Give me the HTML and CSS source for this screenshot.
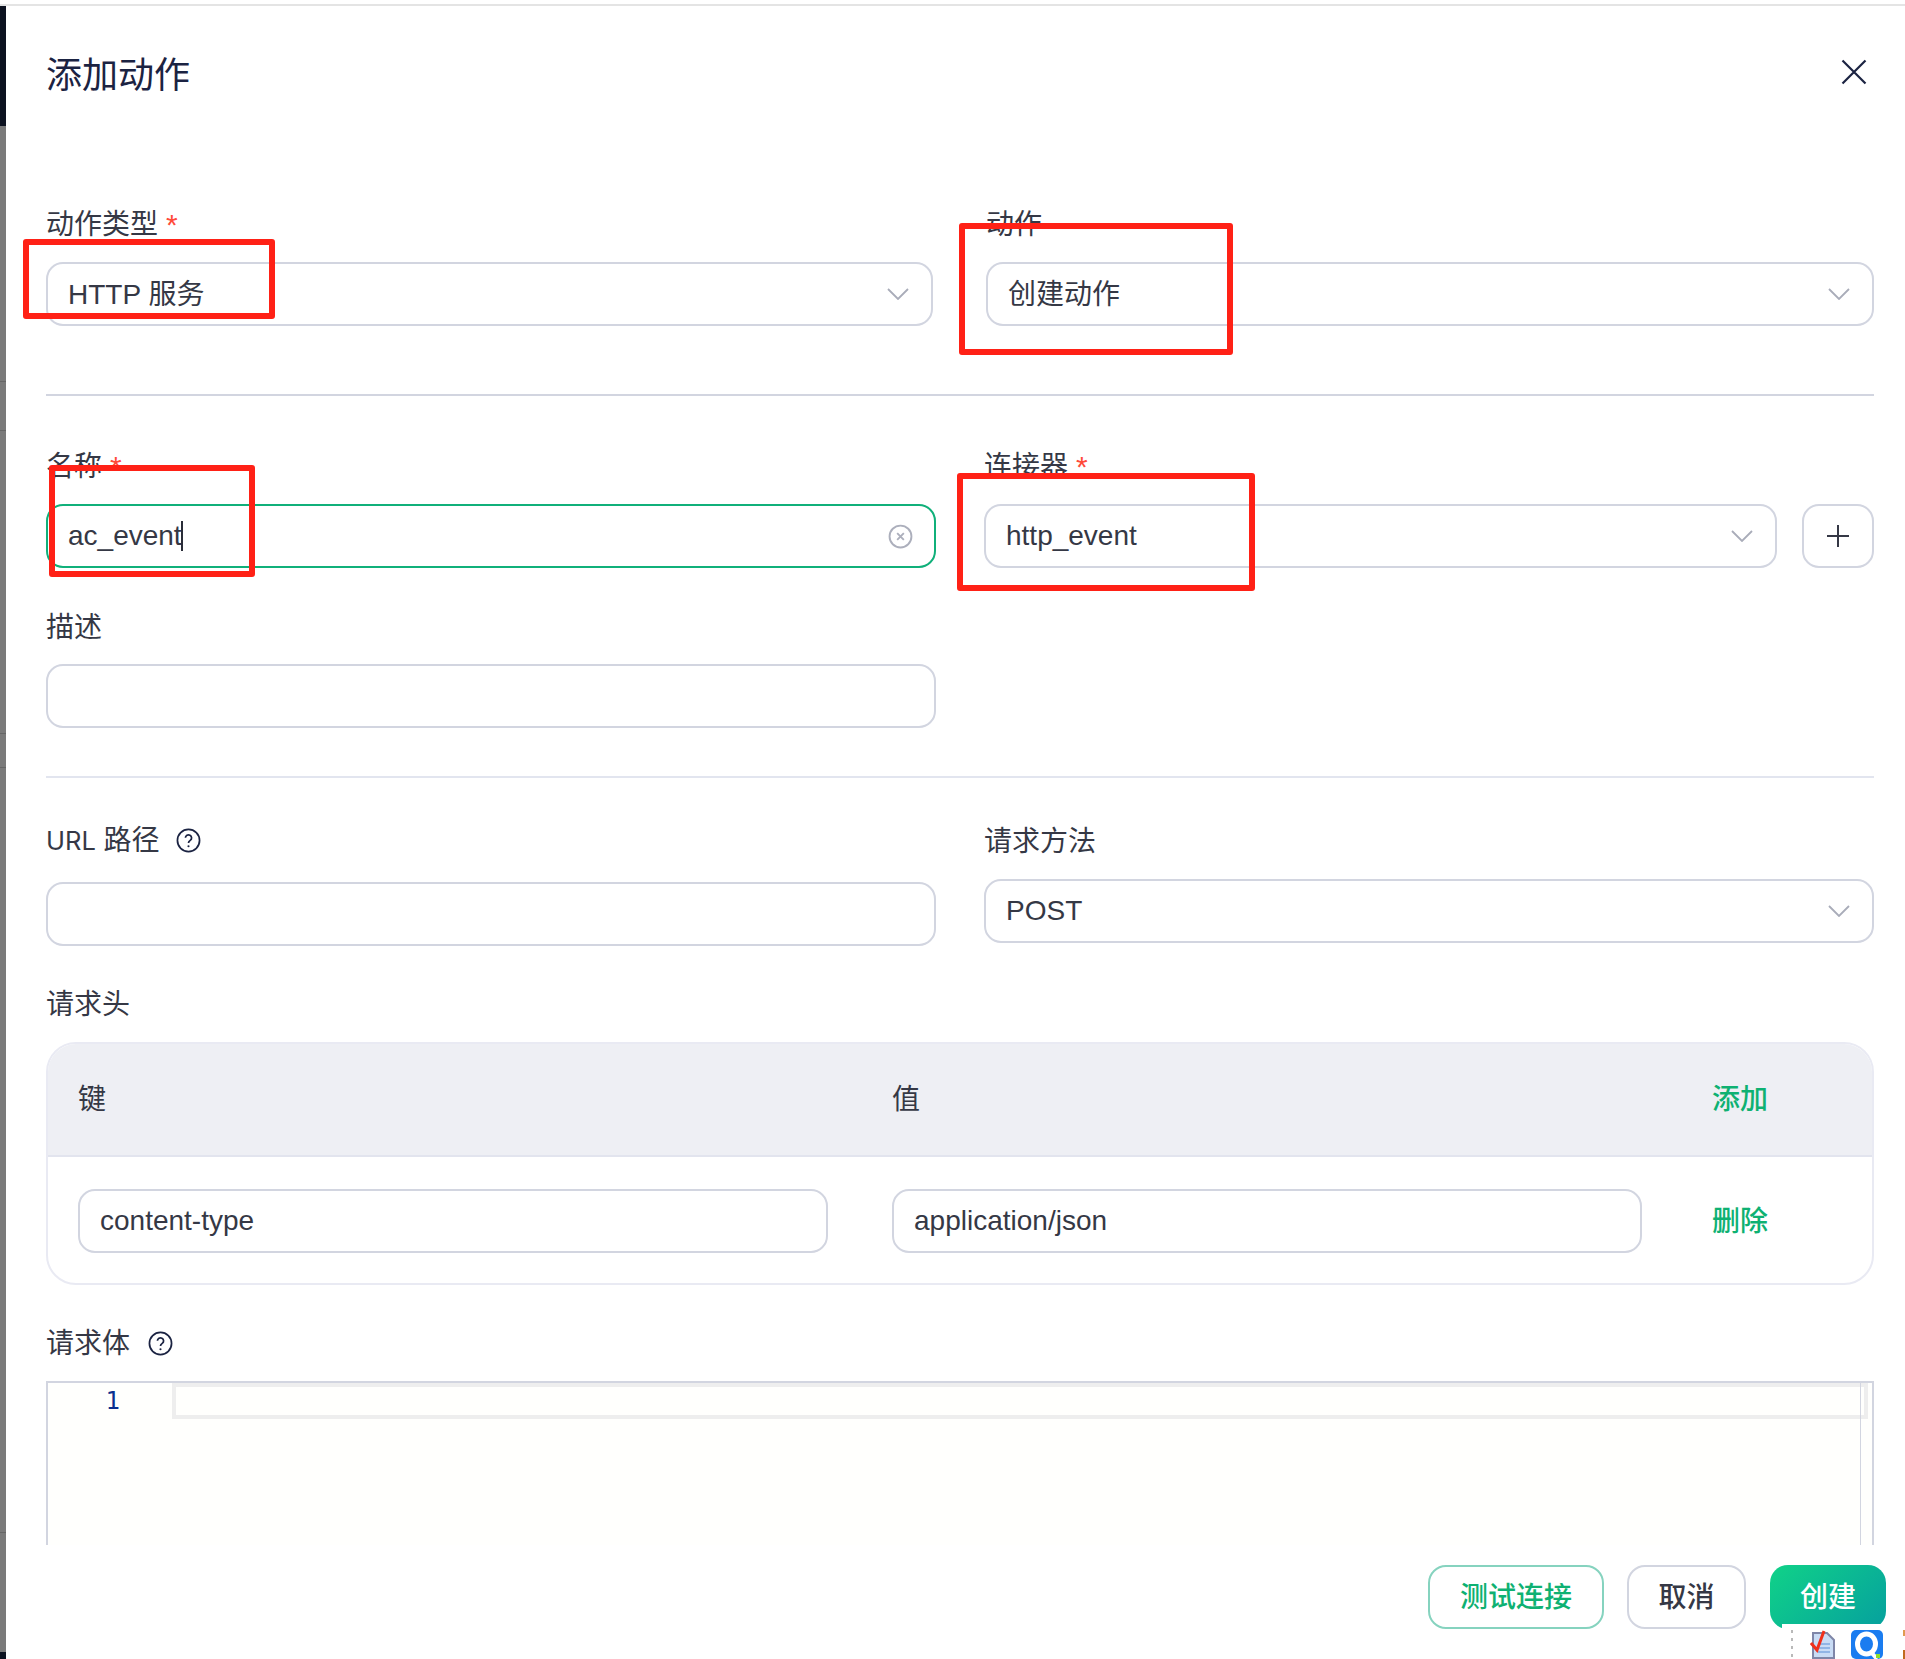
FILE: index.html
```html
<!DOCTYPE html>
<html lang="zh-CN">
<head>
<meta charset="utf-8">
<title>添加动作</title>
<link rel="stylesheet" href="styles.css">
</head>
<body>
<div class="page">
  <div class="topline"></div>
  <div class="main">
    <div class="strip"></div>
    <div class="modal">
      <header class="head">
        <h1 class="title">添加动作</h1>
        <svg class="close" viewBox="0 0 26 26" aria-label="关闭"><path d="M1.500 1.500 24.500 24.500M24.500 1.500 1.500 24.500"/></svg>
      </header>

      <div class="row row-a">
        <div class="field">
          <label class="label">动作类型<span class="req">*</span></label>
          <div class="control select"><span class="up">HTTP 服务</span><svg class="chev" viewBox="0 0 22 12"><path d="M1 1 11 11 21 1"/></svg></div>
        </div>
        <div class="field">
          <label class="label">动作</label>
          <div class="control select"><span class="up">创建动作</span><svg class="chev" viewBox="0 0 22 12"><path d="M1 1 11 11 21 1"/></svg></div>
        </div>
      </div>

      <div class="divider divider-a"></div>

      <div class="row row-b row-name">
        <div class="field">
          <label class="label">名称<span class="req">*</span></label>
          <div class="control focused"><span class="typed">ac_event<i class="caret"></i></span>
            <svg class="clear" viewBox="0 0 24 24"><circle cx="12" cy="12" r="10.500"/><path d="M8.800 8.800 15.200 15.200M15.200 8.800 8.800 15.200"/></svg>
          </div>
        </div>
        <div class="field">
          <label class="label">连接器<span class="req">*</span></label>
          <div class="connector">
            <div class="control select grow"><span>http_event</span><svg class="chev" viewBox="0 0 22 12"><path d="M1 1 11 11 21 1"/></svg></div>
            <div class="plus"><svg viewBox="0 0 24 24"><path d="M12 1V23M1 12H23"/></svg></div>
          </div>
        </div>
      </div>

      <div class="field half desc">
        <label class="label">描述</label>
        <div class="control"></div>
      </div>

      <div class="divider divider-b"></div>

      <div class="row row-b row-url">
        <div class="field">
          <label class="label url-label"><span class="latin">URL</span> 路径<svg class="help" viewBox="0 0 26 26"><circle cx="13" cy="13" r="11.500"/><path d="M9.800 10.200a3.200 3.200 0 1 1 5 2.700c-1.200.8-1.800 1.400-1.800 2.800"/><circle class="dot" cx="13" cy="19" r="1.100"/></svg></label>
          <div class="control"></div>
        </div>
        <div class="field">
          <label class="label">请求方法</label>
          <div class="control select raised"><span>POST</span><svg class="chev" viewBox="0 0 22 12"><path d="M1 1 11 11 21 1"/></svg></div>
        </div>
      </div>

      <div class="field headers">
        <label class="label">请求头</label>
        <div class="table">
          <div class="tr th">
            <div>键</div>
            <div>值</div>
            <div class="link">添加</div>
          </div>
          <div class="tr td">
            <div class="control cell">content-type</div>
            <div class="control cell">application/json</div>
            <div class="link">删除</div>
          </div>
        </div>
      </div>

      <div class="field body-field">
        <label class="label">请求体<svg class="help" viewBox="0 0 26 26"><circle cx="13" cy="13" r="11.500"/><path d="M9.800 10.200a3.200 3.200 0 1 1 5 2.700c-1.200.8-1.800 1.400-1.800 2.800"/><circle class="dot" cx="13" cy="19" r="1.100"/></svg></label>
        <div class="editor">
          <div class="gutter">1</div>
          <div class="curline"></div>
          <div class="ruler"></div>
        </div>
      </div>

      <footer class="foot">
        <button class="btn btn-test">测试连接</button>
        <button class="btn btn-cancel">取消</button>
        <button class="btn btn-ok">创建</button>
      </footer>
    </div>
  </div>

  <div class="mark m1"></div>
  <div class="mark m2"></div>
  <div class="mark m3"></div>
  <div class="mark m4"></div>

  <div class="tray">
    <div class="grip"></div>
    <svg class="tray-doc" viewBox="0 0 26 29">
      <path d="M3 3H17L24 10V28H3Z" fill="#c9dcf5" stroke="#7f86a8" stroke-width="2"/>
      <path d="M8 14H20M8 18H20M8 22H20" stroke="#7fa8e0" stroke-width="1.500"/>
      <path d="M1 13 7 20 14 1" fill="none" stroke="#f0301c" stroke-width="3"/>
    </svg>
    <svg class="tray-q" viewBox="0 0 32 29">
      <rect width="32" height="29" rx="5" fill="#1a7cf0"/>
      <ellipse cx="15.500" cy="14" rx="9" ry="10" fill="none" stroke="#fff" stroke-width="5"/>
      <path d="M20 22 26 29" stroke="#fff" stroke-width="4"/>
      <rect x="25" y="24" width="4" height="4" fill="#8ee02a"/>
    </svg>
    <div class="tray-edge"></div>
  </div>
</div>
</body>
</html>
```
FILE: styles.css
```css
* { box-sizing: border-box; }
html, body { margin: 0; padding: 0; background: #fff; }
body {
  width: 1905px;
  height: 1659px;
  overflow: hidden;
  font-family: "Liberation Sans", "Noto Sans CJK SC", sans-serif;
  color: #353845;
  font-size: 28px;
}
.page { position: relative; width: 1905px; height: 1659px; padding-top: 4px; display: flex; flex-direction: column; overflow: hidden; }
.topline { height: 2px; background: #e4e4e4; flex: none; }
.main { flex: 1; display: flex; min-height: 0; }
.strip {
  width: 6px;
  flex: none;
  background: linear-gradient(to bottom,
    #0c1220 0 120px,
    #7a7a7a 120px 375px, #666 375px 376px,
    #7a7a7a 376px 424px, #666 424px 425px,
    #7a7a7a 425px 727px, #666 727px 728px,
    #7a7a7a 728px 761px, #666 761px 762px,
    #7a7a7a 762px 1526px, #666 1526px 1527px,
    #7a7a7a 1527px 1646px, #0c1220 1646px);
}
.modal { flex: 1; min-width: 0; padding: 0 31px 0 40px; }

.head { height: 196px; display: flex; justify-content: space-between; align-items: flex-start; padding-top: 45px; }
.title { margin: 0; font-size: 36px; line-height: 50px; font-weight: 400; color: #1b2342; }
.close { width: 26px; height: 26px; margin: 8px 7px 0 0; flex: none; }
.close path { fill: none; stroke: #1b2342; stroke-width: 2.2; }

.row { display: grid; grid-template-columns: 890px 890px; column-gap: 48px; }
.row-a { grid-template-columns: 887px 888px; column-gap: 53px; }
.field { display: block; min-width: 0; }
.half { width: 890px; }
.label { display: flex; align-items: center; height: 40px; margin-bottom: 20px; padding-top: 5px; font-size: 28px; line-height: 35px; color: #353845; white-space: pre; }
.latin { font-family: Inter, sans-serif; font-size: 25.5px; }
.req { color: #ff4a3a; margin-left: 8px; font-size: 30px; }

.control {
  height: 64px;
  border: 2px solid #d2d5e0;
  border-radius: 17px;
  background: #fff;
  padding: 0 20px;
  display: flex;
  align-items: center;
  justify-content: space-between;
  font-size: 28px;
  color: #353845;
}
.up { margin-bottom: 5px; }
.chev { width: 22px; height: 12px; margin-right: 2px; flex: none; }
.chev path { fill: none; stroke: #a9acb9; stroke-width: 1.8; }
.focused { border-color: #10b07a; }
.typed { display: flex; align-items: center; }
.caret { display: block; width: 2px; height: 30px; background: #2a2d38; margin-left: -1px; }
.clear { width: 25px; height: 25px; margin-right: 1px; flex: none; }
.clear circle, .clear path { fill: none; stroke: #acafbc; stroke-width: 1.8; }

.divider-a { height: 2px; background: #d2d5e0; margin-top: 68px; }
.row-name { margin-top: 47px; }
.row-b .label { margin-bottom: 21px; }
.row-name .label { padding-top: 6px; }

.connector { display: flex; gap: 25px; }
.grow { flex: 1; min-width: 0; }
.plus { width: 72px; height: 64px; flex: none; border: 2px solid #d2d5e0; border-radius: 17px; display: flex; align-items: center; justify-content: center; }
.plus svg { width: 24px; height: 24px; }
.plus path { fill: none; stroke: #353845; stroke-width: 2; }

.desc { margin-top: 38px; }
.desc .label { margin-bottom: 18px; padding-top: 2px; }
.divider-b { height: 2px; background: #e2e5ef; margin-top: 48px; }
.row-url { margin-top: 42px; }
.row-url .label { margin-bottom: 22px; padding-top: 2px; }
.row-url .url-label { padding-top: 0; }
.raised { margin-top: -3px; }
.help { width: 25px; height: 25px; margin-left: 15px; flex: none; }
.url-label .help { margin-left: 16px; }
.help circle, .help path { fill: none; stroke: #1b2342; stroke-width: 1.8; }
.help .dot { fill: #1b2342; stroke: none; }

.headers { margin-top: 37px; }
.headers .label { margin-bottom: 19px; padding-top: 3px; }
.table { border: 2px solid #e9eaf3; border-radius: 30px; overflow: hidden; }
.tr { display: grid; align-items: center; }
.th { grid-template-columns: 814px 820px 1fr; height: 115px; background: #eeeff4; border-bottom: 2px solid #e2e4ee; margin: -2px -2px 0; padding: 0 0 4px 32px; }
.td { grid-template-columns: 814px 820px 1fr; height: 126px; padding: 1px 0 0 30px; }
.td .link { padding-bottom: 3px; }
.cell { width: 750px; }
.link { color: #0eb172; font-weight: 500; }

.body-field { margin-top: 38px; }
.body-field .label { margin-bottom: 18px; padding-top: 0; }
.body-field .help { margin-left: 18px; }
.editor { position: relative; display: flex; height: 164px; border: 2px solid #d2d5e0; border-bottom: 0; background: #fffffd; }
.gutter { width: 124px; flex: none; padding: 1px 52px 0 0; text-align: right; font-family: "DejaVu Sans Mono", monospace; font-size: 24px; line-height: 34px; color: #0b2f8f; }
.curline { flex: 1; height: 36px; border: 4px solid #eeeeee; margin-right: 4px; }
.ruler { position: absolute; top: 0; bottom: 0; right: 11px; width: 1px; background: #d2d5e0; }

.foot { display: flex; justify-content: flex-end; gap: 23px; margin: 20px -12px 0 0; }
.btn { height: 64px; border-radius: 18px; background: #fff; font: inherit; font-size: 28px; font-weight: 500; padding: 0 0 4px; }
.btn-test { width: 176px; border: 2px solid #86d3bf; color: #0eb172; }
.btn-cancel { width: 119px; border: 2px solid #d2d5e0; color: #353845; }
.btn-ok { width: 116px; border: 0; color: #fff; background: linear-gradient(135deg, #10d288, #06a09e); margin-left: 1px; }

.mark { position: absolute; border: 6px solid #ff2116; border-radius: 3px; }
.m1 { left: 23px; top: 239px; width: 252px; height: 80px; }
.m2 { left: 959px; top: 223px; width: 274px; height: 132px; }
.m3 { left: 49px; top: 465px; width: 206px; height: 112px; }
.m4 { left: 957px; top: 473px; width: 298px; height: 118px; }

.tray { position: absolute; left: 1782px; top: 1624px; right: 0; bottom: 0; background: #fff; display: flex; align-items: flex-start; padding-top: 6px; }
.grip { width: 3px; height: 29px; margin-left: 9px; background: repeating-linear-gradient(to bottom, #b9b9b9 0 3px, #fff 3px 8px); }
.tray-doc { width: 26px; height: 29px; margin-left: 17px; flex: none; }
.tray-q { width: 32px; height: 29px; margin-left: 15px; flex: none; }
.tray-edge { width: 3px; height: 29px; margin-left: 20px; background: linear-gradient(to bottom, #e09a50 0 6px, #fff 6px 20px, #c06a20 20px); }
```
